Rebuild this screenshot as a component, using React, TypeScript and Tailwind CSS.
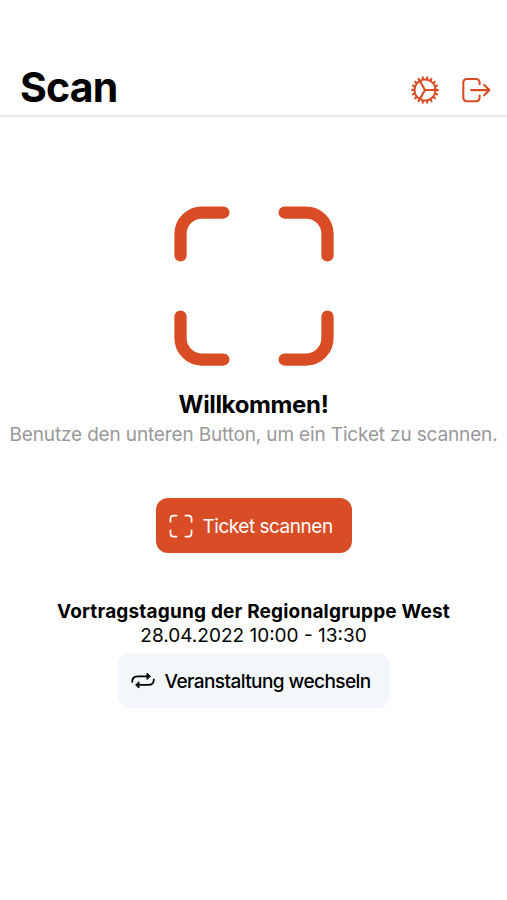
import { IoCogOutline, IoScanOutline } from "react-icons/io5";

const event = {
  title: "Vortragstagung der Regionalgruppe West",
  time: "28.04.2022 10:00 - 13:30",
};

function ExitIcon({ className }: { className?: string }) {
  return (
    <svg
      viewBox="0 0 34 34"
      fill="none"
      stroke="currentColor"
      strokeWidth="2.1"
      strokeLinecap="round"
      strokeLinejoin="round"
      className={className}
    >
      <path d="M20.6 11.2V9.4A3.4 3.4 0 0 0 17.2 6H7.7A3.4 3.4 0 0 0 4.3 9.4V24.8A3.4 3.4 0 0 0 7.7 28.2H17.2A3.4 3.4 0 0 0 20.6 24.8V22.6" />
      <path d="M12.2 17.1H30.4M25.2 11.9L30.4 17.1L25.2 22.3" />
    </svg>
  );
}

function SwitchIcon({ className }: { className?: string }) {
  return (
    <svg
      viewBox="0 0 28 28"
      fill="none"
      stroke="currentColor"
      strokeWidth="1.8"
      strokeLinecap="round"
      strokeLinejoin="round"
      className={className}
    >
      <path d="M3.2 14.8C3.2 11.4 5.2 9.3 8.6 9.3H19" />
      <path d="M18.3 6.4L21.4 9.3L18.3 12.2Z" fill="currentColor" strokeWidth="1" />
      <path d="M24.8 12.4C24.8 15.8 22.8 17.9 19.4 17.9H9" />
      <path d="M9.7 15L6.6 17.9L9.7 20.8Z" fill="currentColor" strokeWidth="1" />
    </svg>
  );
}

function Header() {
  return (
    <header className="flex h-[117px] items-end justify-between border-b-2 border-[#e9e9e9] pl-[20px] pr-[14px]">
      <h1 className="mb-[4px] text-[41px] leading-[48px] font-bold tracking-[-0.8px]">Scan</h1>
      <div className="mb-[8px] flex items-center gap-[17px] text-[#d94d26]">
        <button aria-label="Einstellungen">
          <IoCogOutline className="size-[34px]" />
        </button>
        <button aria-label="Abmelden">
          <ExitIcon className="size-[34px]" />
        </button>
      </div>
    </header>
  );
}

export default function App() {
  return (
    <div className="h-[900px] overflow-hidden bg-white font-['Inter',sans-serif] text-black">
      <Header />
      <main className="flex flex-col items-center whitespace-nowrap">
        <IoScanOutline className="mt-[71px] size-[196px] text-[#d94d26]" />
        <h2 className="mt-[6px] text-[24px] leading-[29px] font-bold tracking-[-0.35px]">Willkommen!</h2>
        <p className="mt-[4px] text-[19px] leading-[24px] tracking-[-0.15px] text-[#999999]">
          Benutze den unteren Button, um ein Ticket zu scannen.
        </p>

        <button className="mt-[51px] flex h-[55px] w-[196px] items-center gap-[8px] rounded-[12px] bg-[#d94d26] pl-[11px] text-[19px] text-white">
          <IoScanOutline className="size-[28px]" />
          <span className="mt-[3px] tracking-[-0.48px]">Ticket scannen</span>
        </button>

        <p className="mt-[47px] text-[19px] leading-[24px] font-bold tracking-[0.18px]">{event.title}</p>
        <p className="text-[19px] leading-[23px]">{event.time}</p>
        <button className="mt-[6px] flex h-[55px] w-[272px] items-center gap-[8px] rounded-[12px] bg-[#f3f6fa] pl-[11px] text-[19px] font-medium">
          <SwitchIcon className="size-[28px]" />
          <span className="mt-[3px] tracking-[-0.56px]">Veranstaltung wechseln</span>
        </button>
      </main>
    </div>
  );
}
